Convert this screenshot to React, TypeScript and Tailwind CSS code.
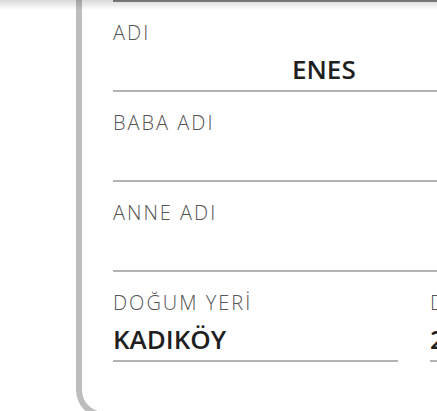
const font = { fontFamily: '"Open Sans", "Noto Sans", sans-serif' }

function Field({ label, value, valueClass = '' }: { label: string; value?: string; valueClass?: string }) {
  return (
    <div className="flex flex-col border-b-2 border-[#b3b3b3] pt-[17px] pb-[3px]">
      <div className="h-[28px] text-[20px] leading-[28px] font-light tracking-[2px] text-[#555] whitespace-nowrap">
        {label}
      </div>
      <div
        className={`mt-[4px] h-[36px] text-[26px] leading-[36px] font-semibold text-[#1f1f1f] whitespace-nowrap ${valueClass}`}
      >
        {value}
      </div>
    </div>
  )
}

export default function App() {
  return (
    <div className="relative h-[411px] w-full overflow-hidden bg-white pl-[76px]" style={font}>
      <div className="pointer-events-none absolute inset-x-0 top-0 h-[10px] bg-gradient-to-b from-black/15 to-transparent" />
      <div className="h-[418px] rounded-bl-[28px] border-b-[6px] border-l-[6px] border-[#bdbdbd] pl-[31px]">
        <div className="h-[2px] bg-[#868686]" />
        <Field label="ADI" value="ENES" valueClass="pl-[179px]" />
        <Field label="BABA ADI" />
        <Field label="ANNE ADI" />
        <div className="flex gap-[32px]">
          <div className="w-[285px] shrink-0">
            <Field label="DOĞUM YERİ" value="KADIKÖY" />
          </div>
          <div className="min-w-0 flex-1">
            <Field label="DOĞUM TARİHİ" value="21.04.1990" />
          </div>
        </div>
      </div>
    </div>
  )
}
